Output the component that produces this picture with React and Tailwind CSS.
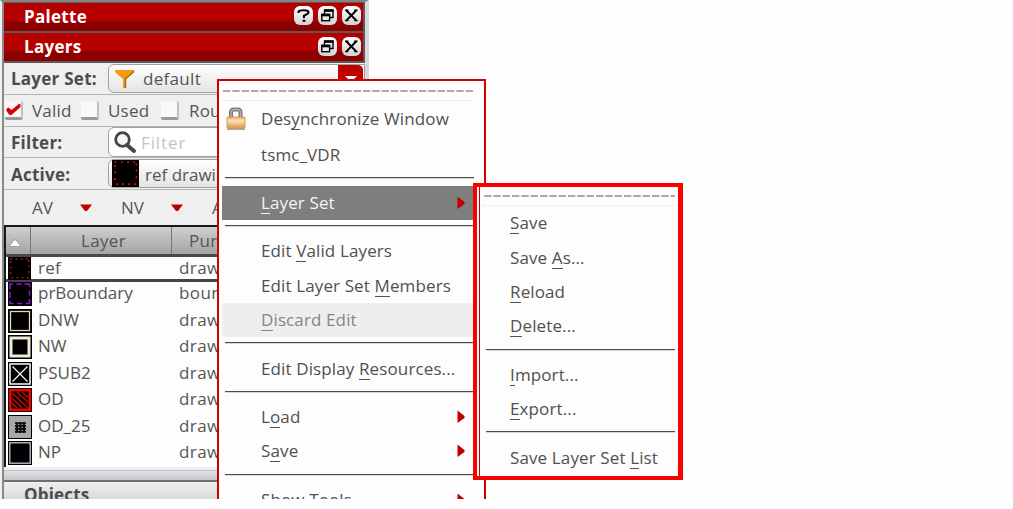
import React from 'react';

const BAR = 'flex w-[361px] shrink-0 items-center border-[#5a5a5a] bg-linear-to-b from-[#b60000] from-60% to-[#8c0000] to-70% pl-[20px] text-[17px] font-bold tracking-[0.3px] text-white';

function RoundButton({ kind }) {
  return (
    <svg width="19" height="19" viewBox="0 0 19 19">
      <defs>
        <linearGradient id={'rb' + kind} x1="0" y1="0" x2="0" y2="1">
          <stop offset="0" stopColor="#fff" />
          <stop offset="1" stopColor="#d2d2d2" />
        </linearGradient>
      </defs>
      <rect x="0" y="0" width="19" height="19" rx="6" fill={'url(#rb' + kind + ')'} />
      {kind === 'help' && (
        <g fill="none" stroke="#000" strokeWidth="2.1">
          <path d="M4.500 7V5.500Q5.300 4.200 9.500 4.200Q14.500 4.200 14.500 6.200Q14.500 7.800 10 9.600V12" />
          <path d="M8.6 14.8h2.8" />
        </g>
      )}
      {kind === 'restore' && (
        <g fill="none" stroke="#000">
          <path d="M6.5 8V4.5H15v7H11.5" strokeWidth="1.4" />
          <path d="M6 4.5h9.7" strokeWidth="2.6" />
          <rect x="3.8" y="8.5" width="7.8" height="6.2" fill="#e8e8e8" strokeWidth="1.4" />
          <path d="M3.2 9h9" strokeWidth="2.6" />
        </g>
      )}
      {kind === 'close' && (
        <g stroke="#000" strokeWidth="2">
          <path d="M4.2 4.2L14.4 14.6M14.4 4.2L4.2 14.6" />
          <path d="M3 4.2h3.4M12.2 4.2h3.4M3 14.6h3.4M12.2 14.6h3.4" strokeWidth="1.4" />
        </g>
      )}
    </svg>
  );
}

function CheckBox({ checked }) {
  return (
    <div className="h-[19px] w-[18px] shrink-0 rounded-[2px] border-r-2 border-b-[3px] border-[#c0c0c0] border-b-[#999] bg-[#f8f8f8]">
      {checked && (
        <svg width="17" height="16" viewBox="0 0 17 16">
          <path d="M1.500 7.500L3.500 6.500L6.500 9L14.500 2.500L15.500 3.500V6L6.500 14L4.500 14L1.500 10Z" fill="#d8000c" />
        </svg>
      )}
    </div>
  );
}

function Swatch({ name, size = 24 }) {
  return (
    <svg width={size} height={size} viewBox="0 0 24 24" className="shrink-0">
      <rect width="24" height="24" fill="#000" />
      {name === 'ref' && (
        <path
          d="M2.500 2H4M8 2h1.500M13.500 2h1.500M19 2h1.500M4 21.500h1.500M9 21.500h1.500M14.500 21.500h1.500M20 21.500h1.500M2 5.500h1.500M2 11h1.500M2 17h1.500M21 4h1.500M21 9.500h1.500M21 15.500h1.500"
          stroke="#ff1010"
          strokeWidth="1.500"
        />
      )}
      {name === 'prBoundary' && (
        <path
          d="M2 7V2H5M8.500 2h5M16.500 2h5V5M21.500 8.500v5M21.500 17v4.500H18M14 21.500H9M5.500 21.500H2V19M2 16V10"
          fill="none"
          stroke="#8f10e8"
          strokeWidth="1.500"
        />
      )}
      {name === 'DNW' && <rect x="2.500" y="2.500" width="19" height="19" fill="none" stroke="#ecd8ae" strokeWidth="1.300" />}
      {name === 'NW' && <rect x="3" y="3" width="18" height="18" fill="none" stroke="#f0ecd8" strokeWidth="3" />}
      {name === 'PSUB2' && (
        <g fill="none" stroke="#fff" strokeWidth="1.500">
          <rect x="2" y="2" width="20" height="20" />
          <path d="M4.500 4.500L19.500 19.500M19.500 4.500L4.500 19.500" strokeWidth="1.100" />
        </g>
      )}
      {name === 'OD' && (
        <g>
          <rect x="1" y="1" width="22" height="22" fill="#f00000" />
          <rect x="3.500" y="3.500" width="17" height="17" fill="#000" />
          <path d="M4 5L20 20M9 4L20 14M14 4L20 9.500M4 10L14 20M4 15L9 20" stroke="#e80000" strokeWidth="1.300" />
        </g>
      )}
      {name === 'OD_25' && (
        <g>
          <rect x="1" y="1" width="22" height="22" fill="#a8a8a8" />
          <rect x="7" y="7" width="11" height="11" fill="#111" />
          <path d="M6.500 9.500h12M6.500 12.500h12M6.500 15.500h12" stroke="#a8a8a8" strokeDasharray="1.300 2.200" />
          <path d="M6.500 7h12M6.500 18h12" stroke="#a8a8a8" strokeDasharray="1 2.500" />
        </g>
      )}
      {name === 'NP' && <rect x="1.800" y="1.800" width="20.400" height="20.400" fill="none" stroke="#c4c8d8" strokeWidth="1.300" />}
    </svg>
  );
}

function Down() {
  return (
    <svg width="12" height="8" viewBox="0 0 12 8">
      <path d="M0 0.5H12L7 7H5Z" fill="#c00000" />
    </svg>
  );
}

function Funnel() {
  return (
    <svg width="21" height="20" viewBox="0 0 21 20">
      <path d="M1 1H20V3L12 10V19H9V10L1 3Z" fill="#f39a10" />
      <path d="M19.500 2V3L11.500 10V19" fill="none" stroke="#a8681a" strokeWidth="1.400" />
    </svg>
  );
}

function Magnifier() {
  return (
    <svg width="24" height="23" viewBox="0 0 24 23" fill="none">
      <circle cx="9.5" cy="8.5" r="6.8" fill="#f6f6f6" stroke="#454545" strokeWidth="2.8" />
      <path d="M14 14L21 20" stroke="#454545" strokeWidth="4" strokeLinecap="round" />
    </svg>
  );
}

function Lock() {
  return (
    <svg width="20" height="24" viewBox="0 0 20 24">
      <defs>
        <linearGradient id="brass" x1="0" y1="0" x2="0" y2="1">
          <stop offset="0" stopColor="#e9b56a" />
          <stop offset="0.35" stopColor="#fbe0ae" />
          <stop offset="1" stopColor="#d9954a" />
        </linearGradient>
      </defs>
      <path d="M5 11V5.5Q5 2.5 8 2.5H11.5Q14.500 2.500 14.500 5.500V11" fill="none" stroke="#777" strokeWidth="4" />
      <path d="M5 11V5.500Q5 2.500 8 2.500H11.500Q14.500 2.500 14.500 5.500V11" fill="none" stroke="#b4b4b4" strokeWidth="1.300" />
      <rect x="1" y="10" width="18" height="11.500" rx="1" fill="url(#brass)" stroke="#c78b45" strokeWidth="0.800" />
      <path d="M1 22.500H19" stroke="#b9a78f" />
    </svg>
  );
}

/* Menu caption with an underlined access key at index `at`. */
function Caption({ text, at = -1 }) {
  if (at < 0) return <span>{text}</span>;
  return (
    <span>
      {text.slice(0, at)}
      <span className="inline-block h-[23px] border-b border-current leading-[24px]">{text[at]}</span>
      {text.slice(at + 1)}
    </span>
  );
}

function Item({ text, at, arrow, icon, active, disabled, pad = 'pl-[39px]', track = 'tracking-[0.12px]' }) {
  const look = active ? 'bg-[#7d7f7d] text-[#f4f4f4]' : disabled ? 'bg-[#eeeeee] text-[#858585]' : 'text-[#505050]';
  return (
    <div className={`flex h-[34.400px] shrink-0 items-center whitespace-pre ${pad} ${track} ${look}`}>
      {icon && <span className="-ml-[35px] mr-[15px] w-[20px]">{icon}</span>}
      <Caption text={text} at={at} />
      {arrow && (
        <svg className="mr-[9px] ml-auto" width="8" height="14" viewBox="0 0 8 14">
          <path d="M0.500 0.500L7.500 6V8L0.500 13Z" fill="#c00000" />
        </svg>
      )}
    </div>
  );
}

function Rule() {
  return (
    <div className="h-[14px] shrink-0 pt-[5px] pl-[3px]">
      <div className="border-t border-b border-t-[#4c4c4c] border-b-[#d8d8d8]" />
    </div>
  );
}

function TearOff({ w }) {
  return (
    <svg width={w} height="2" className="block shrink-0">
      <path d={`M0 1H${w}`} stroke="#5a5a5a" strokeWidth="1.200" strokeDasharray="7.400 1.930" />
    </svg>
  );
}

const LAYERS = [
  ['prBoundary', 'boundary'],
  ['DNW', 'drawing'],
  ['NW', 'drawing'],
  ['PSUB2', 'drawing'],
  ['OD', 'drawing'],
  ['OD_25', 'drawing'],
  ['NP', 'drawing'],
];

const FORM_ROW = 'flex shrink-0 items-center border-b border-[#b5b5b5] pl-[7px]';
const FORM_LABEL = 'w-[97px] tracking-[0.25px] text-[#4c4c4c]';
const FIELD = 'flex h-[29px] flex-1 items-center rounded-l-[6px] border border-[#a0a0a0] bg-linear-to-b from-white to-[#e4e4e4]';

export default function App() {
  return (
    <div className="h-[509px] w-[1013px] overflow-hidden bg-[#fefefe] font-['Open_Sans','Noto_Sans',sans-serif] text-[17px] leading-[24px] text-[#555]">
      <div className="relative h-[499px] overflow-hidden">
        <div className="flex h-[499px] w-[369px] flex-col border-t-2 border-r-4 border-l-2 border-[#d7d9dc] border-t-[#858585] border-l-[#f0f0f0] bg-[#efefef]">
          <div className="flex h-full w-[363px] flex-col border-l-2 border-[#8a8a8a]">
            <div className={`${BAR} h-[31px] border-t border-r-2 border-b-2`}>
              <span className="mr-auto">Palette</span>
              <div className="flex gap-[5px] pr-[2px] pb-[3px]">
                <RoundButton kind="help" />
                <RoundButton kind="restore" />
                <RoundButton kind="close" />
              </div>
            </div>
            <div className={`${BAR} h-[30px] border-r-2 border-b-2`}>
              <span className="mr-auto">Layers</span>
              <div className="flex gap-[5px] pr-[2px] pb-[1px]">
                <RoundButton kind="restore" />
                <RoundButton kind="close" />
              </div>
            </div>
            <div className={`${FORM_ROW} h-[32px]`}>
              <b className={FORM_LABEL}>Layer Set:</b>
              <div className={`${FIELD} pl-[5px]`}>
                <Funnel />
                <span className="ml-[8px] tracking-[0.3px]">default</span>
                <span className="mr-px ml-auto flex h-[28px] w-[25px] items-center justify-center rounded-r-[5px] bg-[#bd0000]">
                  <svg width="12" height="8"><path d="M0 1H12L6 7Z" fill="#fff" /></svg>
                </span>
              </div>
            </div>
            <div className="flex h-[32px] shrink-0 items-center border-b border-[#b5b5b5] pl-px tracking-[0.2px]">
              <CheckBox checked />
              <span className="ml-[9px] w-[49px]">Valid</span>
              <CheckBox />
              <span className="ml-[9px] w-[53px]">Used</span>
              <CheckBox />
              <span className="ml-[10px]">Routing</span>
            </div>
            <div className={`${FORM_ROW} h-[31px]`}>
              <b className={`${FORM_LABEL} pt-[2px]`}>Filter:</b>
              <div className="flex h-[30px] flex-1 items-center rounded-l-[6px] border border-[#a0a0a0] bg-white pl-[4px]">
                <Magnifier />
                <span className="ml-[4px] pt-[2px] tracking-[0.9px] text-[#c4c4c4]">Filter</span>
              </div>
            </div>
            <div className={`${FORM_ROW} h-[32px]`}>
              <b className={`${FORM_LABEL} pt-[2px]`}>Active:</b>
              <div className={`${FIELD} pl-[3px]`}>
                <Swatch name="ref" size={27} />
                <span className="ml-[6px] pt-[2px]">ref drawing</span>
              </div>
            </div>
            <div className="flex h-[35px] shrink-0 items-center pl-[28px]">
              <span className="w-[48px]">AV</span>
              <Down />
              <span className="ml-[29px] w-[50px]">NV</span>
              <Down />
              <span className="ml-[29px]">AS</span>
            </div>
            <div className="flex h-[242px] shrink-0 flex-col border-t-2 border-l-2 border-[#181818] bg-[#fdfdfd]">
              <div className="flex h-[30px] shrink-0 items-center border-b-3 border-[#4a4a4a] bg-linear-to-b from-[#cfcfcf] to-[#a4a4a4]">
                <div className="flex h-full w-[25px] items-center border-r border-[#777] pt-[4px] pl-[3px]">
                  <svg width="12" height="8"><path d="M0 7.500L5 1H7L12 7.500Z" fill="#fff" stroke="#888" strokeWidth="0.700" /></svg>
                </div>
                <div className="flex h-full w-[141px] items-center justify-center border-r border-[#777] pl-[5px] tracking-[0.3px]">Layer</div>
                <div className="pl-[17px] tracking-[0.3px]">Purpose</div>
              </div>
              <div className="flex h-[25px] shrink-0 items-center border-b-3 border-[#454545] pl-[2px]">
                <Swatch name="ref" size={23} />
                <span className="ml-[7px] w-[141px] tracking-[0.3px]">ref</span>
                <span className="tracking-[0.4px]">drawing</span>
              </div>
              {LAYERS.map(([name, purpose]) => (
                <div key={name} className="flex h-[26.500px] shrink-0 items-start pl-[2px]">
                  <Swatch name={name} />
                  <span className="ml-[6px] w-[141px] -mt-px">{name}</span>
                  <span className="-mt-px tracking-[0.4px]">{purpose}</span>
                </div>
              ))}
            </div>
            <div className="mt-[3px] h-[12px] shrink-0 border-t border-b-2 border-[#c0c2c4] border-b-[#707070] bg-linear-to-b from-[#e0e2e5] to-[#c4c7cb]" />
            <div className="h-[30px] shrink-0 bg-linear-to-b from-[#f0f0f0] to-[#c8c8c8] pt-px pl-[20px] font-bold tracking-[0.200px] text-[#4c4c4c]">Objects</div>
          </div>
        </div>

        <div className="absolute top-[79px] left-[217px] flex h-[440px] w-[269px] flex-col border-2 border-[#d00000] bg-[#fdfdfd] pr-[10px] pl-[3px]">
          <div className="mb-px flex h-[20px] shrink-0 flex-col justify-center border-b border-dotted border-[#e4e4e4] pl-[1px]">
            <TearOff w={252} />
          </div>
          <Item text="Desynchronize Window" at={3} icon={<Lock />} />
          <div className="h-px shrink-0" />
          <Item text="tsmc_VDR" />
          <Rule />
          <Item text="Layer Set" at={0} arrow active />
          <Rule />
          <Item text="Edit Valid Layers" at={5} />
          <Item text="Edit Layer Set Members" at={15} />
          <Item text="Discard Edit" at={0} disabled />
          <Rule />
          <Item text="Edit Display Resources..." at={13} />
          <Rule />
          <Item text="Load" at={1} arrow />
          <Item text="Save" at={1} arrow />
          <Rule />
          <Item text="Show Tools" arrow />
        </div>

        <div className="absolute top-[183px] left-[473px] flex h-[297px] w-[210px] border-4 border-r-5 border-[#fb0000] bg-[#fdfdfd] pl-[2px]">
          <div className="flex flex-1 flex-col border-l border-[#d00000] pr-[4px] pl-[3px]">
            <div className="flex h-[19px] shrink-0 flex-col justify-center border-b border-dotted border-[#e4e4e4] pl-[1px]">
              <TearOff w={191} />
            </div>
            <Item pad="pl-[27px]" text="Save" at={0} />
            <Item pad="pl-[27px]" text="Save As..." at={5} />
            <Item pad="pl-[27px]" text="Reload" at={0} />
            <Item pad="pl-[27px]" text="Delete..." at={0} />
            <Rule />
            <Item pad="pl-[27px]" text="Import..." at={0} />
            <Item pad="pl-[27px]" text="Export..." at={0} />
            <Rule />
            <Item pad="pl-[27px]" text="Save Layer Set List" at={15} />
          </div>
        </div>
      </div>
    </div>
  );
}
